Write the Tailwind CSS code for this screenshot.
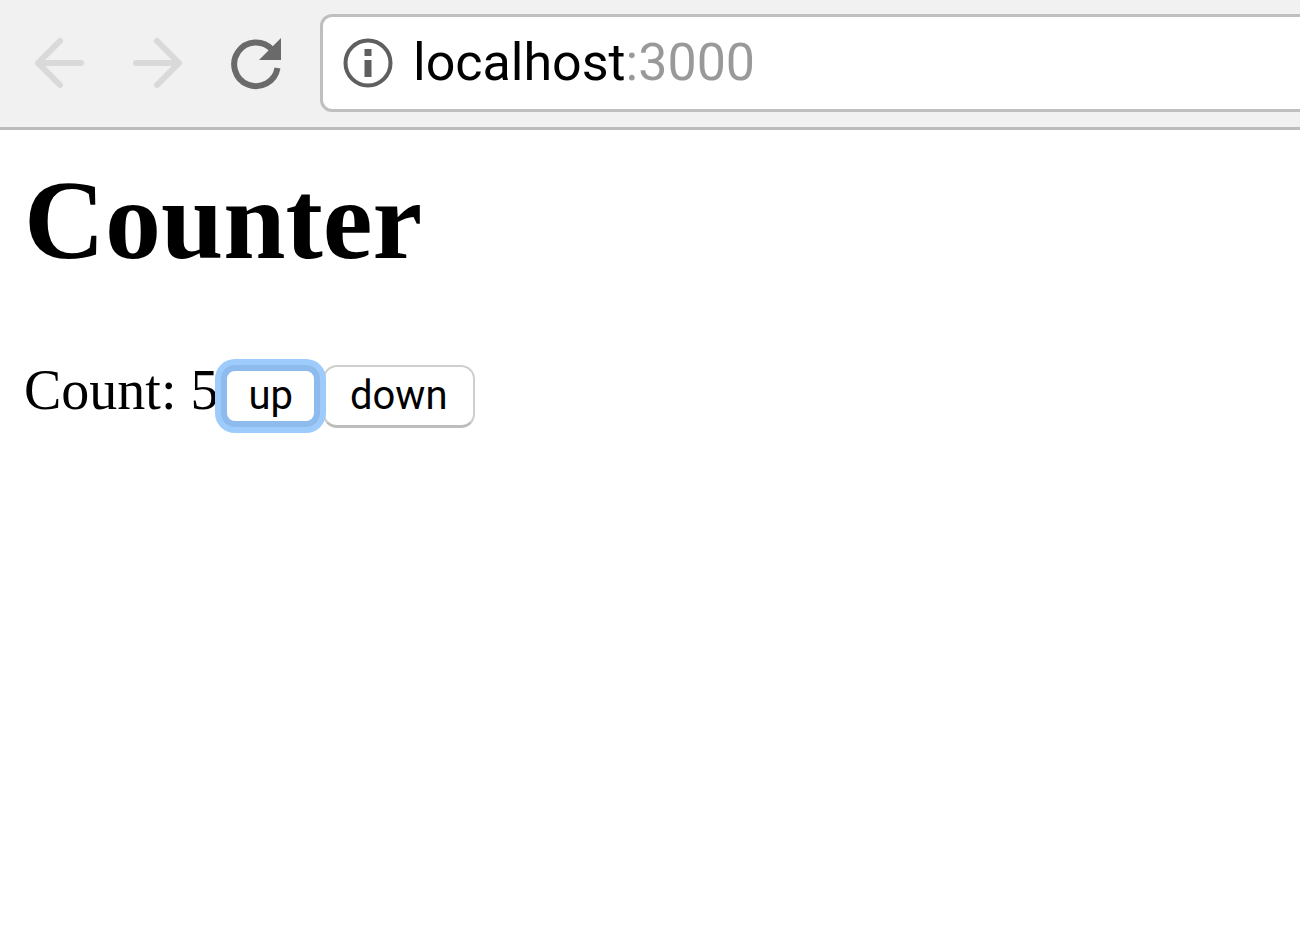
<!DOCTYPE html>
<html lang="en">
<head>
    <meta charset="UTF-8">
    <meta name="viewport" content="width=device-width, initial-scale=1.0">
    <title>Counter</title>
    <script src="https://cdn.jsdelivr.net/npm/@tailwindcss/browser@4"></script>
</head>
<body class="bg-white min-h-screen overflow-x-hidden text-black">
<!-- Browser toolbar -->
<header class="flex items-center bg-[#f1f1f1] border-b-3 border-[#bcbcbc] pt-[14px] pb-[15px] pl-8">
    <div class="flex shrink-0 items-center gap-11">
        <button type="button" aria-label="Back" class="text-[#d9d9d9]">
            <svg class="size-[54px]" viewBox="0 0 54 54" fill="none" stroke="currentColor" stroke-width="6" stroke-linecap="round" stroke-linejoin="round">
                <path d="M49 27H7M28 5L6 27l22 22"/>
            </svg>
        </button>
        <button type="button" aria-label="Forward" class="text-[#d9d9d9]">
            <svg class="size-[54px]" viewBox="0 0 54 54" fill="none" stroke="currentColor" stroke-width="6" stroke-linecap="round" stroke-linejoin="round">
                <path d="M6 27h41M27 5l22 22-22 22"/>
            </svg>
        </button>
        <button type="button" aria-label="Reload" class="text-[#6a6a6a]">
            <svg class="size-[54px]" viewBox="0 0 54 54">
                <path d="M49.500 32A21.800 21.800 0 1 1 44 13.500" fill="none" stroke="currentColor" stroke-width="6"/>
                <path d="M53 2v22H31z" fill="currentColor"/>
            </svg>
        </button>
    </div>
    <form class="ml-[38px] -mr-3 flex h-[98px] min-w-0 flex-1 items-center gap-5 rounded-xl border-3 border-[#bfbfbf] bg-white pl-5">
        <svg class="size-[50px] shrink-0 text-[#5f5f5f]" viewBox="0 0 50 50" fill="currentColor">
            <circle cx="25" cy="25" r="22.500" fill="none" stroke="currentColor" stroke-width="4"/>
            <path d="M21.500 11h7v7h-7zM21.500 22h7v17h-7z"/>
        </svg>
        <input type="text" aria-label="Address" value="localhost:3000" spellcheck="false"
               class="min-w-0 flex-1 bg-[linear-gradient(to_right,#000_213px,#999_213px)] bg-clip-text font-[Roboto,sans-serif] text-[52px] leading-[60px] text-transparent outline-none">
    </form>
</header>

<!-- Counter page -->
<main class="px-6 pt-[26px] font-['Liberation_Serif',serif]">
    <h1 class="text-[112px] leading-[128px] font-bold">Counter</h1>
    <div class="mt-[74px] flex items-baseline text-[56px] leading-[64px]">
        <span>Count: <span id="count">5</span></span>
        <button type="button" id="up" class="relative z-10 ml-[3px] rounded-[14px] border-2 border-[#c6c6c6] bg-white px-[25px] pt-[6px] pb-[6px] font-[Roboto,sans-serif] text-[40px] leading-[46px] ring-6 ring-[#9ccbfc] outline-6 -outline-offset-6 outline-[#8dbbee]">up</button>
        <button type="button" id="down" class="ml-[3px] rounded-[14px] border-2 border-b-3 border-[#cfcfcf] border-b-[#bdbdbd] bg-white px-[25px] pt-[6px] pb-[6px] font-[Roboto,sans-serif] text-[40px] leading-[46px]">down</button>
    </div>
</main>

<script>
    const count = document.getElementById('count');
    document.getElementById('up').addEventListener('click', () => {
        count.textContent = Number(count.textContent) + 1;
    });
    document.getElementById('down').addEventListener('click', () => {
        count.textContent = Number(count.textContent) - 1;
    });
</script>
</body>
</html>
